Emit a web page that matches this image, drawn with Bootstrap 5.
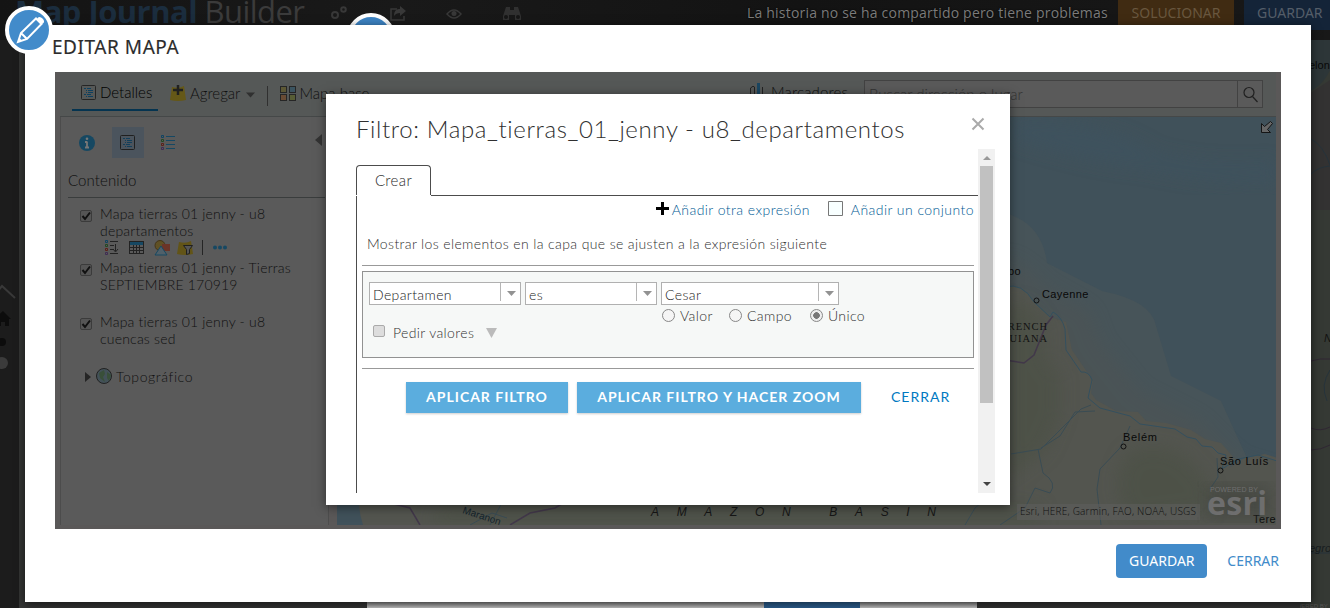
<!DOCTYPE html>
<html lang="es">
<head>
<meta charset="utf-8">
<meta name="viewport" content="width=device-width, initial-scale=1">
<title>Map Journal Builder</title>
<link href="https://cdn.jsdelivr.net/npm/bootstrap@5.3.0/dist/css/bootstrap.min.css" rel="stylesheet">
<style>
html,body{height:100%}
body{background:#1c1c1c;overflow:hidden;font-family:"Noto Sans","Open Sans",sans-serif;font-size:14px;color:#4c4c4c}
svg{display:block;flex:none}
.stage{width:1330px;height:608px;overflow:hidden}
.topbar{height:40px;background:linear-gradient(100deg,#141414,#191919 30%,#131313 60%,#181818)}
.topbar>*{flex:none}
.brand{font:31px/40px "Open Sans",sans-serif;color:#3b3b3b;margin:-9px 0 0 15px;width:316px;white-space:nowrap;letter-spacing:-.55px}
.brand b{color:#1b2d3e}
.top-msg{color:#7b7b7b;font-family:"Open Sans",sans-serif;font-size:14px;letter-spacing:.2px;width:361px;line-height:26px;text-shadow:0 0 2px #000;white-space:nowrap}
.top-btn{font-size:14px;line-height:26px;height:30px;color:#686461;white-space:nowrap}
.fix{width:116px;background:#402b12;color:#69573f;margin-left:10px}
.store{width:86px;background:#142438;color:#555e69;margin-left:10px;padding-left:13px}
.strip-left{width:19px;background:#1c1c1c}
.strip-map{background:#343534}
.under-dialog{left:367px;top:590px;width:610px;height:18px;background:linear-gradient(#777 60%,#c8c8c8)}
.under-dialog i{display:block;width:96px;height:18px;margin-left:397px;background:#2c5f90}
.half{left:347px;top:13px}
.editor{left:25px;top:25px;width:1286px;height:577px;background:#fff;box-shadow:0 2px 9px rgba(0,0,0,.6)}
.pencil{left:5px;top:6px}
.editor-title{font-size:19px;line-height:44px;height:47px;padding-left:27px;color:#2c2c2c;letter-spacing:.55px;-webkit-text-stroke:.15px #2c2c2c}
.viewer{height:457px;margin:0 30px;background:#5a5858;padding:0 5px 4px 5px;font-family:Lato,sans-serif;font-weight:300;color:#101010}
.tools{height:45px;background:#555857;border-bottom:1px solid #454848;font-size:15px}
.tools .tab-on{width:86px;height:39px;border-bottom:2px solid #053450;margin-left:12px;padding-top:4px;color:#000}
.search{width:399px;height:28px;border:1px solid #424242;background:#5a5a5a;margin-top:8px;color:#333}
.search span:last-child{width:25px;border-left:1px solid #424242}
.side{width:269px;background:#5a5a5a;border-left:1px solid #4c4c4c;border-right:1px solid #4d4d4d;padding-left:7px}
.side-tabs{height:51px}
.pick{width:32px;height:31px;background:#4b545d;margin-left:17px}
.side h2{font-size:15px;font-weight:300;line-height:25px;height:30px;margin:0;border-bottom:1px solid #3a3d3d;width:257px;letter-spacing:.1px}
.layer{font-size:14px;line-height:17px;letter-spacing:.2px;padding-left:12px;height:54px}
.cbx{width:12px;height:12px;border:1px solid #3b3b3b;border-radius:2px;background:#555;margin:5px 8px 0 0;flex:none}
.filter{left:271px;top:22px;width:684px;height:411px;background:#fff;box-shadow:0 2px 10px rgba(0,0,0,.5);padding:0 15px 12px 30px;color:#303030;font-size:14px;letter-spacing:.38px}
.filter h1{font-size:24px;font-weight:300;line-height:30px;margin:0;padding-top:20px;letter-spacing:.62px;white-space:nowrap}
.scroller{height:344px}
.pane{width:622px;padding-top:16px}
.tab-c{width:75px;height:30px;border:1px solid #4c4c4c;border-bottom:0;border-radius:4px 4px 0 0;font-size:15px;color:#2a2a2a}
.tab-rest{border-bottom:1px solid #4c4c4c}
.pane-body{border-left:1px solid #4c4c4c;padding:0 4px 0 5px}
.lnk{color:#005a94;letter-spacing:.45px}
.rule{height:1px;background:#999}
.expr{height:87px;border:1px solid #929292;background:#f6f8f7;padding:10px 6px 9px}
.combo{height:23px;border:1px solid #b0b0b0;background:#fff;line-height:24px;padding-left:3px;color:#222}
.combo i{width:20px;height:18px;border-left:1px solid #b5b5b5;padding:8px 0 0 6px}
.rad{width:13px;height:13px;border:1px solid #888;border-radius:50%;background:#f5f5f5;flex:none}
.rad.on{background:radial-gradient(circle,#777 0 3px,#eee 3.6px)}
.go{height:31px;background:#5badde;color:#fff;font-size:14px;font-weight:700;letter-spacing:1px;line-height:30px;text-align:center;box-shadow:0 1px 2px rgba(0,0,0,.2);white-space:nowrap}
.bar{width:17px;background:#f1f1f1}
.thumb{width:13px;height:237px;background:#c1c1c1;margin:5px auto 0}
.foot{padding:15px 32px 0 0;font-size:14px}
.save{width:91px;height:34px;border-radius:4px;background:#428bca;color:#fff;line-height:34px;text-align:center}
</style>
</head>
<body>
<div class="stage position-relative d-flex flex-column">
  <header class="topbar d-flex align-items-start">
    <div class="brand"><b>Map Journal</b> Builder</div>
    <svg width="416" height="28" fill="none" stroke="#383838" stroke-width="2">
      <circle cx="4" cy="15" r="3"/><circle cx="12.500" cy="9.500" r="2.300"/>
      <path d="M66 9h-6v11h13v-4" stroke-width="1.500"/><path d="M63 16c0-6 3-7 6-7V6l6 5-6 5v-3q-4 0-6 3z" fill="#383838" stroke="none"/>
      <path d="M116 14q7-8 14 0q-7 8-14 0z" stroke-width="1.500"/><circle cx="123" cy="13.500" r="2.500" fill="#383838" stroke="none"/>
      <path d="M175 7h4v3h4V7h4l3 9v4h-6v-5h-6v5h-6v-4z" fill="#303030" stroke="none"/><circle cx="175" cy="17" r="2" fill="#161616" stroke="none"/><circle cx="187" cy="17" r="2" fill="#161616" stroke="none"/>
    </svg>
    <span class="top-msg">La historia no se ha compartido pero tiene problemas</span>
    <span class="top-btn fix text-center">SOLUCIONAR</span>
    <span class="top-btn store">GUARDAR</span>
  </header>
  <main class="d-flex flex-grow-1">
    <div class="strip-left">
      <svg width="19" height="340" fill="#0c0c0c"><path d="M-8 258L2 246L15 258" fill="none" stroke="#393939" stroke-width="2"/><path d="M-6 279L3 271l8 8h-2v7H5v-4H1v4h-5v-7z"/><circle cx="2" cy="302" r="4"/><circle cx="2" cy="323" r="6" fill="#3b3b3b"/></svg>
    </div>
    <div class="strip-map flex-grow-1 d-flex justify-content-end">
      <svg width="30" height="568" viewBox="1300 40 30 568" font-family="Liberation Sans" font-size="11">
        <path fill="#353934" d="M1300 40h30v568h-30z"/><path fill="#2d3638" d="M1300 40h30v30q-9 20-30 25z"/><path fill="#333232" d="M1300 100l30-20v130h-30z"/>
        <path d="M1311 139q12 6 19 26M1311 174q7-7 19-8M1330 370q-10 15-3 31M1311 553h19" stroke="#26333b" fill="none"/>
        <path d="M1311 361q9-3 19-2M1311 428q9 4 19-1M1311 450q10 0 19-5" stroke="#302733" fill="none"/>
        <text x="1309" y="69" fill="#080808">elon</text><text x="1324" y="342" fill="#111" font-style="italic">N</text><text x="1309" y="552" fill="#171d20" font-style="italic">egro</text>
        <text x="1287" y="608" font-size="6" fill="#555">POWERED BY</text>
      </svg>
    </div>
  </main>
  <div class="under-dialog position-absolute"><i></i></div>
  <svg class="half position-absolute" width="48" height="48"><circle cx="24" cy="24" r="22" fill="#3d84c4" stroke="#fff" stroke-width="4"/></svg>

  <section class="editor position-absolute">
    <div class="editor-title">EDITAR MAPA</div>
    <div class="viewer position-relative d-flex flex-column">
      <div class="tools d-flex">
        <div class="tab-on d-flex align-items-center">
          <svg style="margin-left:9px" width="16" height="16" fill="none"><rect x=".5" y=".5" width="14" height="14" rx="1" stroke="#252525"/><path d="M3 3.500h2M6 3.500h4M5 5.500h1M7 5.500h5M5 7.500h1M7 7.500h5M3 9.500h2M6 9.500h4M5 11.500h1M7 11.500h5" stroke="#0d4060"/></svg>
          <span style="margin-left:3px">Detalles</span>
        </div>
        <svg width="16" height="42" class="me-1" style="margin-left:12px"><path d="M2 15q7 2 12-1l2 14q-8 2-16 0z" fill="#655817"/><path d="M8 13v10M3 18h10" stroke="#202020" stroke-width="2.500"/></svg>
        <span style="line-height:42px">Agregar</span>
        <svg width="9" height="42" style="margin-left:6px"><path d="M0 20.500h9l-4.500 5z" fill="#303030"/></svg>
        <svg width="28" height="42"><path d="M12.500 14v20" stroke="#303030"/></svg>
        <svg width="16" height="42" style="margin-left:-3px" fill="none" stroke="#262626"><rect x=".5" y="14.500" width="6" height="6" fill="#5d5835"/><rect x="9.500" y="14.500" width="6" height="6" fill="#3b5460"/><rect x=".5" y="22.500" width="6" height="6" fill="#694b34"/><rect x="9.500" y="22.500" width="6" height="6" fill="#575d35"/></svg>
        <span style="line-height:42px;margin-left:3px">Mapa base</span>
        <div class="ms-auto d-flex" style="margin-right:13px">
          <svg width="13" height="42" fill="none"><path d="M.5 40V16q3-3 4-1v24M12.500 40V15" stroke="#222"/><path d="M8.500 11v29" stroke="#1a4661" stroke-width="3"/></svg>
          <span style="line-height:41px;margin-left:8px;width:93px;letter-spacing:.15px">Marcadores</span>
          <div class="search d-flex justify-content-between align-items-center">
            <span class="ps-1">Buscar dirección o lugar</span>
            <span class="h-100 d-flex align-items-center justify-content-center"><svg width="17" height="17" fill="none" stroke="#202020" stroke-width="1.200"><circle cx="7" cy="6.500" r="5"/><path d="M10.500 10.500l5 5.500"/></svg></span>
          </div>
        </div>
      </div>
      <div class="d-flex flex-grow-1">
        <aside class="side">
          <div class="side-tabs d-flex align-items-center">
            <svg width="16" height="16" style="margin-left:11px"><circle cx="8" cy="8" r="8" fill="#164862"/><path d="M8 6.500V13M6 7h2M6 12.500h4" stroke="#777" stroke-width="1.800"/><circle cx="8" cy="3.800" r="1.300" fill="#777"/></svg>
            <span class="pick d-flex align-items-center justify-content-center"><svg width="16" height="15" fill="none"><rect x=".5" y=".5" width="14" height="14" rx="1" stroke="#202020"/><path d="M3 3.500h2M6 3.500h4M5 5.500h1M7 5.500h5M5 7.500h1M7 7.500h5M3 9.500h2M6 9.500h4M5 11.500h1M7 11.500h5" stroke="#123f5b"/></svg></span>
            <svg width="15" height="17" style="margin-left:17px" fill="none"><path d="M5 2.500h9M5 6.500h9M5 10.500h9M5 14.500h9" stroke="#164863"/><path d="M.5 1.500h2v2h-2z" stroke="#104462"/><path d="M.5 5.500h2v2h-2z" stroke="#234922"/><path d="M.5 9.500h2v2h-2z" stroke="#5d2018"/><path d="M.5 13.500h2v2h-2z" stroke="#402c54"/></svg>
            <svg class="ms-auto" width="7" height="18" style="margin-right:6px"><path d="M7 0v12L0 6z" fill="#333"/></svg>
          </div>
          <h2>Contenido</h2>
          <div class="layer d-flex" style="padding-top:7px;height:61px"><span class="cbx"><svg width="10" height="10"><path d="M1.500 5l2.500 3L9 1.500" fill="none" stroke="#111" stroke-width="2"/></svg></span>
            <div>Mapa tierras 01 jenny - u8<br>departamentos
              <svg width="125" height="16" style="margin:1px 0 0 5px" fill="none"><path d="M5 1.500h8M5 5.500h4M5 9.500h4M5 13.500h8M10.500 4v7M8 9l2.500 3L13 9" stroke="#222"/><path d="M.5.500h2v2h-2z" stroke="#104462"/><path d="M.5 4.500h2v2h-2z" stroke="#234922"/><path d="M.5 8.500h2v2h-2z" stroke="#5d2018"/><path d="M.5 12.500h2v2h-2z" stroke="#402c54"/><rect x="24.500" y="1.500" width="14" height="12" stroke="#222"/><path d="M25 3.500h13" stroke="#164863" stroke-width="3"/><path d="M25 7.500h13M25 10.500h13M28.500 5v9M31.500 5v9M34.500 5v9" stroke="#222"/><circle cx="55" cy="5.500" r="5" fill="#605124" stroke="#443519"/><path d="M57 4h8v7h-8z" fill="#6b3427"/><path d="M56 6l6 9H50z" fill="#506069" stroke="#164863"/><path d="M74 2q7 2 12-1l2 13q-8 2-16 0z" fill="#625417"/><path d="M78.500 5.500h9l-3 4v4l-3 1v-5z" fill="#555" stroke="#202020"/><path d="M97.500 0v15" stroke="#252525"/><g fill="#164863"><circle cx="110" cy="7.500" r="2"/><circle cx="115" cy="7.500" r="2"/><circle cx="120" cy="7.500" r="2"/></g></svg>
            </div></div>
          <div class="layer d-flex"><span class="cbx"><svg width="10" height="10"><path d="M1.500 5l2.500 3L9 1.500" fill="none" stroke="#111" stroke-width="2"/></svg></span><div>Mapa tierras 01 jenny - Tierras<br>SEPTIEMBRE 170919</div></div>
          <div class="layer d-flex"><span class="cbx"><svg width="10" height="10"><path d="M1.500 5l2.500 3L9 1.500" fill="none" stroke="#111" stroke-width="2"/></svg></span><div>Mapa tierras 01 jenny - u8<br>cuencas sed</div></div>
          <div class="layer d-flex align-items-start"><svg width="31" height="18" style="margin:1px 0 0 5px"><path d="M0 4l6 5-6 5z" fill="#252525"/><circle cx="19" cy="8" r="7.500" fill="#435158" stroke="#222"/><path d="M14 5l5-3 1 4-2 3 2 5-5-4zM22 4l4 3-2 6-2-3z" fill="#394f39"/></svg><span style="line-height:20px;letter-spacing:.6px">Topográfico</span></div>
        </aside>
        <svg width="939" height="408" viewBox="337 116 939 408" style="margin-left:8px" font-family="Liberation Sans" fill="none">
          <defs><filter id="soft" x="-20%" y="-20%" width="140%" height="140%"><feGaussianBlur stdDeviation="9"/></filter></defs>
          <path fill="#40515a" d="M337 116h939v408H337z"/>
          <path fill="#3d5260" d="M1015 120q100 2 140 33 60 15 120 8v20q-80-2-130-15-50-3-130-28z" opacity=".6" filter="url(#soft)"/>
          <path fill="#475459" d="M1005 212q37 10 42 50l55 28q50 10 54 35l15 50 50 25 25 55 30 20v49H1005z"/>
          <path fill="#535350" d="M1005 255q25 10 40 30l45 25 10 30 40 50 60 30 40 40 36 10v31H1005z" opacity=".3" filter="url(#soft)"/>
          <path fill="#53554f" d="M337 524V490h20q6-2 4-10h644V286q17-5 29 15l16 15 16 5 6 28 15 22 6 9-2 12 5 7 20 11 22 1 8 9 20 2 25 7 14 9 16 4 14 16-6 9 16-10 20-4 35 11v90z"/>
          <path fill="#4a4f43" opacity=".55" filter="url(#soft)" d="M1005 300l25 5 15 20 0 30 15 20 0 40-15 35-40 30zM1130 450q35-12 60 10t20 50l-80 10q-25-40 0-70zM440 505h600v19H430z"/>
          <path fill="#40515a" d="M337 480h26q-8 20 0 44h-26z"/>
          <path d="M1005 286q17-5 29 15l16 15 3-5q9 5 12 17l1 21 15 22q8-1 11 8l-4 18 12 10 30 8 10 8 35 5 12 8 9 2 6 7 10 1 6 6 8 2-4 14 16-10 20-4 35 11" stroke="#34505f"/>
          <path d="M1011 453l30-5 40-40 10-4M1041 447l19-12 15-24 20-1M1038 448l5 24q15 10 7 20l-15-5-10 20-25 17M1130 425l-10 22-20 21-3 20 4 36M470 524l22-12 15 5M490 524l15-28M710 490q0 10-15 12M965 524l10-17 20-17M1210 488l8-12-1-19" stroke="#3a4c54"/>
          <path d="M1053 315l-7 9-12 30-10 8-19-3M370 490l20 12 20 5 10 17M510 524l20-12 25-5 20-12 55-5" stroke="#42384a" stroke-width="1.500"/>
          <g fill="#090909" font-size="11" letter-spacing=".4"><text x="1008" y="274">bo</text><text x="1042" y="297">Cayenne</text><text x="1123" y="440" letter-spacing=".7">Belém</text><text x="1220" y="464" letter-spacing=".7">São Luís</text><text x="1253" y="522">Tere</text></g>
          <g stroke="#111"><circle cx="1036.500" cy="299.500" r="2.500"/><circle cx="1123.500" cy="445.500" r="2.500"/><circle cx="1220.500" cy="469.500" r="2.500"/></g>
          <g fill="#131313" font-family="Liberation Serif" font-size="10.500"><text x="1001" y="329" textLength="46">FRENCH</text><text x="1001" y="341" textLength="46">GUIANA</text></g>
          <text x="651" y="515" font-size="12" font-style="italic" fill="#161616" textLength="285">AMAZON BASIN</text>
          <text x="462" y="512" font-size="10" fill="#15242c" transform="rotate(18 462 512)">Maranon</text>
          <path d="M1017 503h183v16h-183z" fill="#606060" opacity=".5"/>
          <text x="1020" y="514" font-family="Open Sans" font-size="10" fill="#101010" textLength="176">Esri, HERE, Garmin, FAO, NOAA, USGS</text>
          <g fill="#6e6e6e"><path d="M1209 486h60v30h-60z" fill="#3d3f3b" opacity=".6" filter="url(#soft)"/><text x="1210" y="491" font-size="7" textLength="48" lengthAdjust="spacingAndGlyphs">POWERED BY</text><text x="1207" y="514" font-family="Open Sans" font-weight="700" font-size="32" textLength="60">esri</text></g>
          <path d="M1271.500 120.500l-6 5-3-3v9h9l-3-3 5-6z" transform="translate(-1 0)" stroke="#151515" fill="#666"/>
        </svg>
      </div>

      <section class="filter position-absolute d-flex flex-column">
        <div class="d-flex justify-content-between" style="height:55px"><h1>Filtro: Mapa_tierras_01_jenny - u8_departamentos</h1>
          <svg width="14" height="14" style="margin:23px 10px 0 0"><path d="M1.500 1.500l11 11M12.500 1.500l-11 11" stroke="#aaa" stroke-width="2"/></svg></div>
        <div class="scroller d-flex">
          <div class="pane d-flex flex-column">
            <div class="d-flex" style="height:31px"><div class="tab-c d-flex align-items-center justify-content-center">Crear</div><div class="tab-rest flex-grow-1"></div></div>
            <div class="pane-body flex-grow-1">
              <div class="d-flex justify-content-end align-items-center lnk" style="height:27px">
                <svg width="13" height="13" style="margin-right:3px;margin-top:-2px"><path d="M6.500 0v13M0 6.500h13" stroke="#000" stroke-width="3"/></svg>
                <span>Añadir otra expresión</span>
                <svg width="15" height="15" style="margin:-3px 8px 0 18px"><path d="M.5.500h14v14H.5z" fill="#f8ffff" stroke="#777"/></svg>
                <span>Añadir un conjunto</span>
              </div>
              <div style="height:42px;line-height:41px;padding-left:5px">Mostrar los elementos en la capa que se ajusten a la expresión siguiente</div>
              <div class="rule" style="margin-bottom:5px"></div>
              <div class="expr">
                <div class="d-flex gap-1">
                  <div class="combo d-flex justify-content-between" style="width:152px">Departamen<i><svg width="9" height="5"><path d="M0 0h9L4.500 5z" fill="#929292"/></svg></i></div>
                  <div class="combo d-flex justify-content-between" style="width:132px">es<i><svg width="9" height="5"><path d="M0 0h9L4.500 5z" fill="#929292"/></svg></i></div>
                  <div class="combo d-flex justify-content-between" style="width:178px">Cesar<i><svg width="9" height="5"><path d="M0 0h9L4.500 5z" fill="#929292"/></svg></i></div>
                </div>
                <div class="d-flex">
                  <div class="d-flex align-items-center" style="width:293px;height:37px;padding:18px 0 0 4px"><span class="cbx" style="margin:-4px 8px 0 0;background:#ddd;border-color:#aaa"></span><span>Pedir valores</span><svg width="11" height="10" style="margin-left:12px"><path d="M0 0h11L5.500 10z" fill="#bbb"/></svg></div>
                  <div class="d-flex align-items-center" style="height:20px"><span class="rad"></span><span style="width:49px;margin-left:5px">Valor</span><span class="rad"></span><span style="width:63px;margin-left:5px">Campo</span><span class="rad on"></span><span style="margin-left:5px">Único</span></div>
                </div>
              </div>
              <div class="rule" style="margin-top:10px"></div>
              <div class="d-flex" style="padding:13px 0 0 44px">
                <span class="go" style="width:162px">APLICAR FILTRO</span><span class="go" style="width:284px;margin-left:9px">APLICAR FILTRO Y HACER ZOOM</span>
                <span style="margin-left:30px;line-height:30px;letter-spacing:1px;color:#0079c1;font-weight:400">CERRAR</span>
              </div>
            </div>
          </div>
          <div class="bar d-flex flex-column"><svg width="17" height="12"><path d="M5 11h8L9 7z" fill="#999"/></svg><div class="thumb"></div><svg class="mt-auto" width="17" height="14"><path d="M5 3h8l-4 4z" fill="#444"/></svg></div>
        </div>
      </section>
    </div>
    <div class="foot d-flex justify-content-end align-items-center"><span class="save">GUARDAR</span><span style="margin:-2px 0 0 20px;color:#428bca">CERRAR</span></div>
  </section>
  <svg class="pencil position-absolute" width="48" height="48"><circle cx="24" cy="24" r="22" fill="#428bca" stroke="#fff" stroke-width="4"/><path d="M13 36l3-9L31 12.500l5.500 5.500L22 33zM16.500 27.500l5 5" fill="none" stroke="#fff" stroke-width="2"/><path d="M33 11.500q2-1.500 4.500 1t1 4.500l-1.500 1-5-5z" fill="#fff"/><path d="M13 36l1.500-4 2.500 2.500z" fill="#fff"/></svg>
</div>
<script src="https://cdn.jsdelivr.net/npm/bootstrap@5.3.0/dist/js/bootstrap.bundle.min.js"></script>
</body>
</html>
